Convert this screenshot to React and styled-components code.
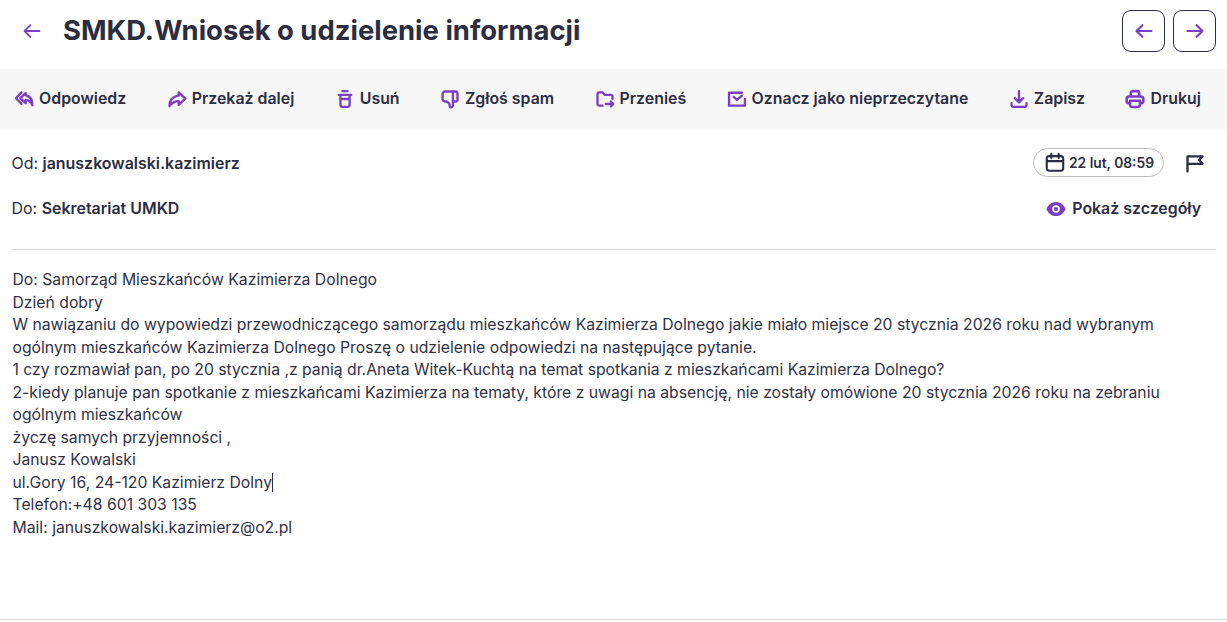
import React from "react";
import styled, { createGlobalStyle } from "styled-components";

const Global = createGlobalStyle`
  html, body { margin: 0; padding: 0; background: #fff; }
  body { font-family: Inter, "Noto Sans", sans-serif; color: #2b2d42; overflow: hidden; }
`;
const Page = styled.div`
  width: 1227px; height: 622px; display: flex; flex-direction: column; box-sizing: border-box;
`;
const Header = styled.header`
  height: 69px; display: flex; align-items: center; padding: 0 11px 8px 21px; box-sizing: border-box;
`;
const BackButton = styled.button`
  border: 0; background: none; padding: 0; width: 22px; height: 22px; margin-right: 20px; color: #7b3fc4;
  display: flex; align-items: center; justify-content: center;
`;
const Title = styled.h1`
  margin: 0 0 1px; font-size: 27.45px; font-weight: 700; color: #2b2d42; flex: 1; line-height: 32px;
`;
const NavGroup = styled.div`display: flex; gap: 8px;`;
const NavButton = styled.button`
  width: 43px; height: 42px; padding: 0; border: 1px solid #2b2d42; border-radius: 9px; background: #fff; color: #7b3fc4;
  display: flex; align-items: center; justify-content: center;
`;
const Toolbar = styled.nav`
  height: 61px; background: #f7f7f7; display: flex; align-items: center; justify-content: space-between;
  padding: 0 26px 2px 14px; box-sizing: border-box;
`;
const Action = styled.button`
  border: 0; background: none; padding: 0; display: flex; align-items: center; gap: 5px;
  font: 600 15.9px Inter, sans-serif; color: #2b2d42; white-space: nowrap;
  svg { color: #7b3fc4; flex: none; }
`;
const Meta = styled.section`
  margin: 0 11px 0 12px; height: 120px; border-bottom: 1px solid #d9d9d9; box-sizing: border-box; padding-top: 19px;
  display: flex; flex-direction: column; gap: 18px;
`;
const MetaRow = styled.div`display: flex; align-items: center; justify-content: space-between; height: 27px;`;
const Person = styled.div`font-size: 15.95px; color: #2b2d42; padding-top: 2px; margin-left: -0.5px; strong { font-weight: 600; }`;
const MetaRight = styled.div`display: flex; align-items: center; gap: 21px; padding-right: 11px;`;
const DateChip = styled.div`
  height: 29px; width: 131px; padding: 0 9px 0 10px; border: 1px solid #bdbdbd; border-radius: 15px; display: flex; align-items: center; gap: 3px;
  font-size: 13.8px; font-weight: 600; box-sizing: border-box; color: #2b2d42; white-space: nowrap;
`;
const Details = styled.button`
  border: 0; background: none; padding: 2px 15px 0 0; display: flex; align-items: center; gap: 6px;
  font: 600 15.9px Inter, sans-serif; color: #2b2d42; svg { color: #7b3fc4; }
`;
const Body = styled.main`
  flex: 1; margin: 0 11px 0 12.5px; padding-top: 19px; font-size: 15.74px; line-height: 22.55px; color: #2f3146;
`;
const Caret = styled.span`
  display: inline-block; width: 1px; height: 19px; background: #2b2d42; vertical-align: -4px;
`;
const Footer = styled.div`height: 3px; border-top: 1px solid #d9d9d9; box-sizing: border-box;`;

const I = ({ size = 20, sw = 2.8, children }) => (
  <svg width={size} height={size} viewBox="0 0 24 24" fill="none" stroke="currentColor" strokeWidth={sw} strokeLinecap="round" strokeLinejoin="round">{children}</svg>
);
const ArrowLeft = ({ size, sw = 2.2 }) => <I size={size} sw={sw}><path d="M21 12H3M10 5l-7 7 7 7" /></I>;
const ArrowRight = ({ size, sw = 2.2 }) => <I size={size} sw={sw}><path d="M3 12h18M14 5l7 7-7 7" /></I>;
const Reply = () => <I><path d="M9 4 2.500 11 9 18M14 5 7.500 11l6.500 6v-4c3.500 0 6 1.500 8 6.500 0-7-3-11-8-12z" /></I>;
const Forward = () => <I><path d="M14 4l8 7.500-8 7.500v-4.500c-5 0-8 2-11 6 0-7 4-11.500 11-12.500z" /></I>;
const Trash = () => <I><path d="M9 2.500h6M4.500 7h15M6.500 7v12a2.500 2.500 0 0 0 2.500 2.500h6a2.500 2.500 0 0 0 2.500-2.500V7M6.500 12h11" /></I>;
const Thumb = () => <I><path d="M6 3h12a3 3 0 0 1 3 3v7a2 2 0 0 1-2 2h-3.500v4.500a2.500 2.500 0 0 1-2.500 2.500h-1l-1-5-3-2H6a3 3 0 0 1-3-3V6a3 3 0 0 1 3-3zM15.500 3v12" /></I>;
const Move = () => <I><path d="M9 20H5a2 2 0 0 1-2-2V6a2 2 0 0 1 2-2h4l2.500 3H19a2 2 0 0 1 2 2v3M13 18h9M19 15l3 3-3 3" /></I>;
const Unread = () => <I><path d="M21.500 12v8H2.500V4.500H18M8 9.500l4 3.500 6-5" /></I>;
const Save = () => <I><path d="M12 2.500V16M7 11l5 5 5-5M3 17v2a2.500 2.500 0 0 0 2.500 2.500h13A2.500 2.500 0 0 0 21 19v-2" /></I>;
const Printer = () => <I sw={3.1}><path d="M7 9V5a2.500 2.500 0 0 1 2.500-2.500h5A2.500 2.500 0 0 1 17 5v4M6 17H4.500A2.500 2.500 0 0 1 2 14.500V12a3 3 0 0 1 3-3h14a3 3 0 0 1 3 3v2.500a2.500 2.500 0 0 1-2.500 2.500H18M6 14h12v5a2.500 2.500 0 0 1-2.500 2.500h-7A2.500 2.500 0 0 1 6 19z" /></I>;
const Calendar = () => <I size={23} sw={2.3}><path d="M5.500 5h13A2.500 2.500 0 0 1 21 7.500v11a2.500 2.500 0 0 1-2.500 2.500h-13A2.500 2.500 0 0 1 3 18.500v-11A2.500 2.500 0 0 1 5.500 5zM8 2.500V7M16 2.500V7M3 10.500h18" /></I>;
const Flag = () => <I size={20} sw={2.8}><path d="M3 22V4h18l-4 4.500 4 4.500H3" /></I>;
const Eye = () => (
  <svg width="20" height="20" viewBox="0 0 24 24" fill="currentColor">
    <path fillRule="evenodd" d="M12 3.500c5.900 0 10 4.200 11.500 8.500-1.500 4.300-5.600 8.500-11.500 8.500S2 16.300.5 12C2 7.700 6.100 3.500 12 3.500zm0 4a4.500 4.500 0 1 0 0 9 4.500 4.500 0 0 0 0-9zm0 2a2.500 2.500 0 1 1 0 5 2.500 2.500 0 0 1 0-5z" />
  </svg>
);

const actions = [
  [Reply, "Odpowiedz"], [Forward, "Przekaż dalej"], [Trash, "Usuń"], [Thumb, "Zgłoś spam"],
  [Move, "Przenieś"], [Unread, "Oznacz jako nieprzeczytane"], [Save, "Zapisz"], [Printer, "Drukuj"],
];
const lines = [
  "Do: Samorząd Mieszkańców Kazimierza Dolnego",
  "Dzień dobry",
  "W nawiązaniu do wypowiedzi przewodniczącego samorządu mieszkańców Kazimierza Dolnego jakie miało miejsce 20 stycznia 2026 roku nad wybranym",
  "ogólnym mieszkańców Kazimierza Dolnego Proszę o udzielenie odpowiedzi na następujące pytanie.",
  "1 czy rozmawiał pan, po 20 stycznia ,z panią dr.Aneta Witek-Kuchtą na temat spotkania z mieszkańcami Kazimierza Dolnego?",
  "2-kiedy planuje pan spotkanie z mieszkańcami Kazimierza na tematy, które z uwagi na absencję, nie zostały omówione 20 stycznia 2026 roku na zebraniu",
  "ogólnym mieszkańców",
  "życzę samych przyjemności ,",
  "Janusz Kowalski",
];

export default function App() {
  return (
    <Page>
      <Global />
      <Header>
        <BackButton><ArrowLeft size={20} /></BackButton>
        <Title>SMKD.Wniosek o udzielenie informacji</Title>
        <NavGroup>
          <NavButton><ArrowLeft size={20} sw={2.6} /></NavButton>
          <NavButton><ArrowRight size={20} sw={2.6} /></NavButton>
        </NavGroup>
      </Header>
      <Toolbar>
        {actions.map(([Icon, label]) => (
          <Action key={label}><Icon />{label}</Action>
        ))}
      </Toolbar>
      <Meta>
        <MetaRow>
          <Person>Od: <strong>januszkowalski.kazimierz</strong></Person>
          <MetaRight>
            <DateChip><Calendar />22 lut, 08:59</DateChip>
            <Flag />
          </MetaRight>
        </MetaRow>
        <MetaRow>
          <Person>Do: <strong>Sekretariat UMKD</strong></Person>
          <Details><Eye />Pokaż szczegóły</Details>
        </MetaRow>
      </Meta>
      <Body>
        {lines.map((l) => <div key={l}>{l}</div>)}
        <div>ul.Gory 16, 24-120 Kazimierz Dolny<Caret /></div>
        <div>Telefon:+48 601 303 135</div>
        <div>Mail: januszkowalski.kazimierz@o2.pl</div>
      </Body>
      <Footer />
    </Page>
  );
}
